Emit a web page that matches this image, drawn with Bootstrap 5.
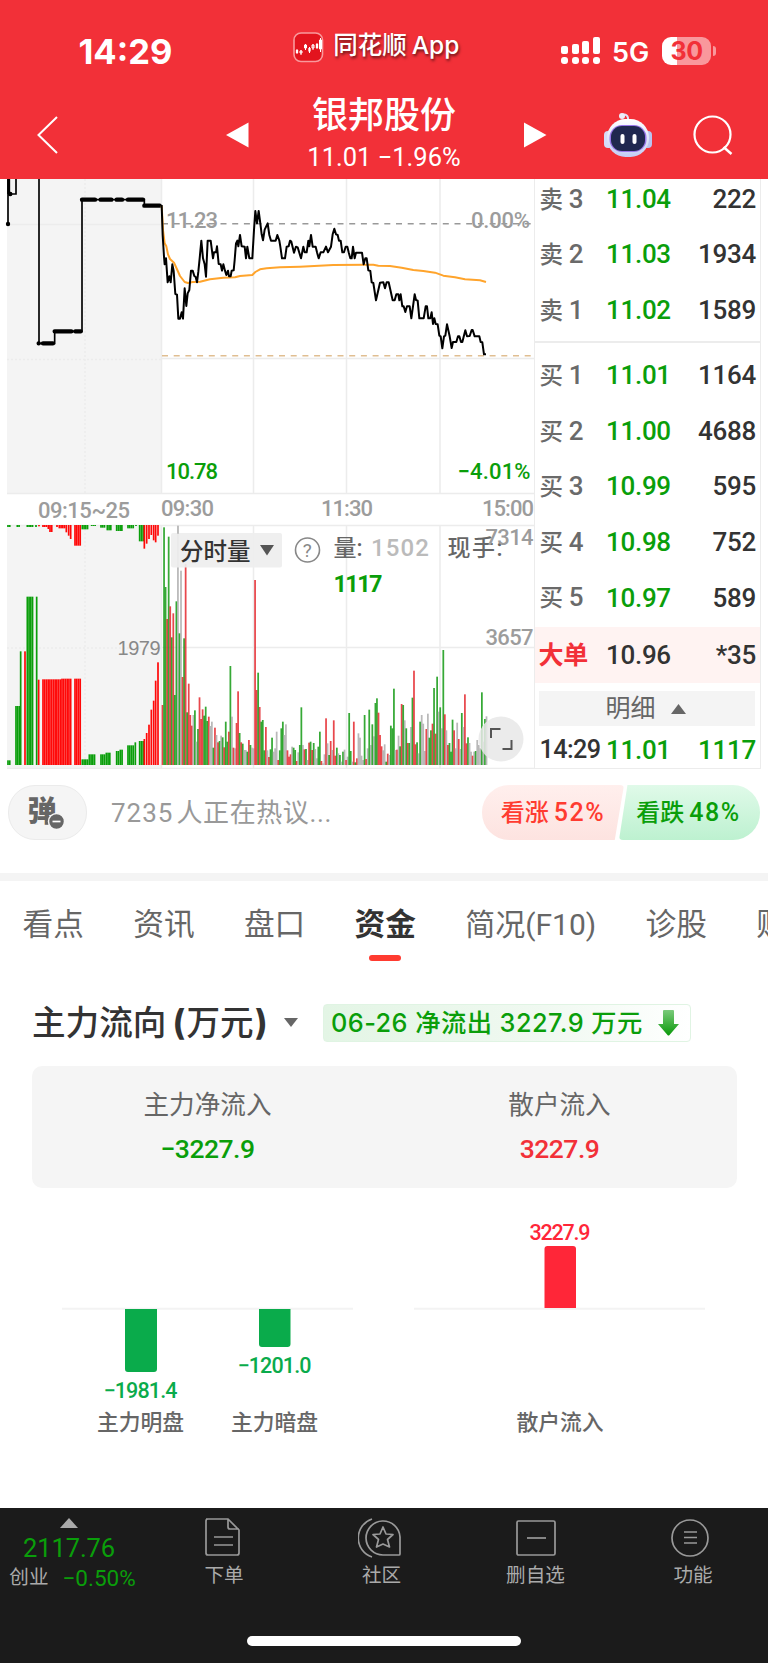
<!DOCTYPE html>
<html lang="zh-CN">
<head>
<meta charset="utf-8">
<meta name="viewport" content="width=device-width, initial-scale=1">
<title>银邦股份</title>
<link href="https://cdn.jsdelivr.net/npm/bootstrap@5.3.0/dist/css/bootstrap.min.css" rel="stylesheet">
<style>
:root{--up:#f23038;--down:#0a9e0a}
body{font-family:Roboto,"Noto Sans CJK SC",sans-serif;background:#fff;color:#333;width:768px;height:1663px;overflow:hidden;line-height:1}
.t-down{color:var(--down)}.t-up{color:var(--up)}
svg{display:block;flex:none}
.nw{white-space:nowrap}
.topbar{background:#f23038;height:179px;color:#fff}
.statusrow{height:94px;padding:0 52px 0 78.5px}
.clock{font:700 34.5px/1 Inter,sans-serif;width:213.5px;padding-top:10px}
.appname{font:500 24.5px/1 Inter,"Noto Sans CJK SC",sans-serif;width:227px;margin-left:9.5px;text-shadow:1px 2px 3px #0009;padding-bottom:4px}
.fiveg{font:600 27px/1 Inter,sans-serif;margin:11px 0 0 11px;width:50px}
.batt{width:49px;height:28px;border-radius:9px;background:linear-gradient(90deg,#fff 31%,#f9989c 31%);color:#f23038;font:700 25px/28px Inter,sans-serif;margin-top:8px;letter-spacing:-.5px}
.nub{width:3px;height:10px;border-radius:0 4px 4px 0;background:#f9989c;margin:8px 0 0 2px}
.titlerow{height:85px;padding:0 0 4px 35.5px}
.stockname{font-weight:500;font-size:36px}
.subprice{font-size:25.5px;margin-top:11px}
.book{width:227px;height:590px;border-right:1.5px solid #ececec;border-bottom:1.5px solid #ececec;border-left:1.5px solid #ececec;font-size:26px;font-weight:500}
.brow{height:55.6px;padding-left:4.5px;padding-right:4px;letter-spacing:-.3px}
.blabel{width:66.5px;font-weight:500}
.lv{color:#6a6a6a}
.blabel i{font-style:normal;font-size:23.5px;margin-right:6px}
.detail{height:35px;margin:8px 5px 0 4px;background:#f4f4f4;color:#666;font-size:25px;font-weight:400}
.talk{height:87px;padding:16px 8px 0}
.danmu{width:79px;height:55px;border-radius:27px;background:#f5f5f5;border:1.5px solid #ebebeb}
.talktext{font-size:26px;color:#999;width:371px;margin-left:24px;letter-spacing:.6px}
.vote{height:55px;font-size:24px;font-weight:500}
.vote span{margin-left:5px;font-size:25px;letter-spacing:1.500px}
.voteup{width:142px;color:#ff3b30;background:linear-gradient(#ffefed,#fde3e0);border-radius:27px 4px 4px 27px;clip-path:polygon(0 0,100% 0,93.5% 100%,0 100%)}
.votedown{width:141px;margin-left:-5px;padding-right:2px;background:linear-gradient(#e0fae9,#bdf1d0);border-radius:4px 27px 27px 4px;clip-path:polygon(6% 0,100% 0,100% 100%,0 100%)}
.tabs{height:86px;gap:49.3px;padding:2px 0 0 22.5px;font-size:30.7px;color:#666;overflow:hidden}
.tabs .on{color:#333;font-weight:700}
.tabs .on:after{content:"";position:absolute;left:14.5px;top:45.5px;width:32px;height:6px;border-radius:3px;background:#ff3b30}
.fundhead{height:99px;padding:0 0 14px 32px}
.fundtitle{font-size:33.6px;font-weight:500;width:252px}
.fundtitle b{font-family:Inter,sans-serif;font-size:35px}
.flowtag{margin-left:25px;width:368px;height:38px;padding-left:7px;border:1.5px solid #e0f4e3;border-radius:4px;background:linear-gradient(90deg,#e3f5e5,#f0f9f1 60%,#fff);font-family:Inter,"Noto Sans CJK SC",sans-serif;font-size:25.3px;font-weight:500;letter-spacing:.45px}
.fundcard{height:122px;margin:0 31px 0 32px;border-radius:10px;background:#f5f5f5}
.fundcard .lab{font-size:25.6px;color:#666}
.fundcard .val{font-size:26.5px;font-weight:500;letter-spacing:-.5px;margin-top:17.5px}
.footer{height:155px;background:#1b1b1b;color:#aaa;font-size:19.6px}
.ix{width:138px;padding-top:10px}
.ixval{font-size:25.5px;letter-spacing:-.1px;margin-top:7.5px}
.fi{padding-top:9px}
.fi span{margin-top:9px}
.homebar{width:274px;height:10px;border-radius:5px;background:#fff;margin:0 auto}
</style>
</head>
<body>
<header class="topbar">
  <div class="statusrow d-flex align-items-center">
    <div class="clock">14:29</div>
    <svg width="31" height="31" viewBox="0 0 31 31" style="margin-left:1px"><rect x="1" y="1" width="28.5" height="28.5" rx="7" fill="#e3141e" stroke="#f9999c" stroke-width="1.6"/><g stroke="#fff" stroke-width="1" fill="#fff"><path d="M4 17v5M8 18v5M12.500 12v6M16.500 15v6M20 12v6M24 11v6M27.500 6v14"/><path stroke-width="2.300" d="M4 18v3M16.500 16v3.500M24 12v4"/><path fill="none" d="M7 19h2v2H7zM11.500 13h2v3h-2zM19 13h2v3h-2zM26.500 8h2v9h-2z"/></g></svg>
    <div class="appname nw">同花顺<span style="margin-left:5px">App</span></div>
    <svg width="40" height="28" viewBox="0 0 40 28" fill="#fff" style="margin:8px 0 0 1px"><rect x="0" y="9" width="7" height="8" rx="2"/><rect x="11" y="7" width="7" height="10" rx="2"/><rect x="21" y="4" width="7" height="13" rx="2"/><rect x="32" y="0" width="7" height="17" rx="2"/><rect y="20" width="7" height="7" rx="3"/><rect x="11" y="20" width="7" height="7" rx="3"/><rect x="21" y="20" width="7" height="7" rx="3"/><rect x="32" y="20" width="7" height="7" rx="3"/></svg>
    <div class="fiveg flex-shrink-0">5G</div><div class="batt text-center flex-shrink-0">30</div><div class="nub flex-shrink-0"></div>
  </div>
  <div class="titlerow d-flex align-items-center">
    <svg width="24" height="42" viewBox="0 0 24 42" fill="none" stroke="#fff" stroke-width="2"><path d="M21 3 2.500 21 21 39"/></svg>
    <svg width="24" height="28" viewBox="0 0 24 28" style="margin-left:166.500px" fill="#fff"><path d="M0 14 22.500 1.500v25z"/></svg>
    <div class="text-center nw" style="width:274px;padding-right:6px"><div class="stockname">银邦股份</div><div class="subprice">11.01 −1.96%</div></div>
    <svg width="24" height="28" viewBox="0 0 24 28" fill="#fff"><path d="M22.500 14 0 1.500v25z"/></svg>
    <svg width="50" height="48" viewBox="0 0 50 48" style="margin:-2px 0 0 55px"><defs><linearGradient id="rb" x1="0" y1="0" x2="0" y2="1"><stop offset="0" stop-color="#fff"/><stop offset="1" stop-color="#c3cdf5"/></linearGradient></defs><path d="M18 5q8-2 7 6" fill="none" stroke="#dfe3f8" stroke-width="2"/><circle cx="19" cy="6" r="3" fill="#eceefa"/><rect x="1" y="21" width="9" height="17" rx="4" fill="#d5dcf8"/><rect x="40" y="21" width="9" height="17" rx="4" fill="#b9c4f1"/><rect x="4" y="9" width="42" height="38" rx="18.500" fill="url(#rb)"/><rect x="6.500" y="15" width="37" height="27" rx="12.500" fill="#9876e8"/><rect x="8" y="16" width="34" height="25" rx="11" fill="#20284f"/><rect x="17.500" y="24" width="4" height="10" rx="2" fill="#fff"/><rect x="29.500" y="24" width="4" height="10" rx="2" fill="#fff"/></svg>
    <svg width="42" height="42" viewBox="0 0 42 42" style="margin-left:39px" fill="none" stroke="#fff" stroke-width="2.200"><circle cx="20.500" cy="20.500" r="18"/><path d="m31.500 33 8 7" stroke-width="2.500"/></svg>
  </div>
</header>

<main>
<div class="d-flex">
  <svg width="534" height="590" viewBox="0 179 534 590" font-family='Roboto,"Noto Sans CJK SC",sans-serif'>
    <path fill="#f4f4f4" d="M7 179h154v314H7zM7 525h154v244H7z"/>
    <g stroke="#ececec" stroke-width="1.500" fill="none">
      <path d="M7 224.500h154M161.500 179v314M253.500 179v314M346.500 179v314M440 179v314M161 358.500h373M7 493.500h527M161.500 525v244M253.500 525v244M346.500 525v244M440 525v244M7 525.500h527M161 647.500h373M7 768.500h527"/>
      <path stroke-dasharray="2 2" d="M85 179v314M7 359.500h154M85 525v244M7 648h154"/>
    </g>
    <path stroke="#999" stroke-dasharray="6 5.700" stroke-width="1.500" d="M162 223.700h370"/>
    <path stroke="#e0be91" stroke-dasharray="6 5.700" stroke-width="1.500" d="M162 355.700h370"/>
    <g font-size="22" font-weight="500" fill="#9c9c9c">
      <text x="166" y="227.500" textLength="52">11.23</text><text x="471" y="227.500" textLength="59">0.00%</text>
      <text x="38" y="517.500" textLength="92">09:15~25</text><text x="161" y="516" textLength="53">09:30</text><text x="321" y="516" textLength="52">11:30</text><text x="482" y="516" textLength="52">15:00</text>
    </g>
    <g font-size="22" font-weight="500" fill="#0a9e0a"><text x="166" y="478.500" textLength="52">10.78</text><text x="457.500" y="478.500" textLength="73">−4.01%</text></g>
    <g transform="translate(0 175) scale(.33333)" fill="none" stroke="#000">
      <path stroke-width="5" d="M24 12v135M48 12v45H28M117 12v493h47v-36h82V74h187v18h50"/>
      <path stroke-width="13" stroke-linecap="round" d="M30 57h1M24 147h.1M116 505h.1M129 505h30M164 469h50M226 469h16M246 74h39M302 74h32M350 74h16M384 74h45M433 92h46"/>
      <path stroke-width="9" d="M26 12v45"/>
    </g>
    <g transform="translate(160 175) scale(.33333)" fill="none" stroke-linejoin="round">
      <polyline stroke="#ffa42c" stroke-width="6" points="5,92 9,165 14,205 19,214 24,238 30,252 42,263 52,285 60,303 74,321 84,324 98,321 120,320 150,313 190,308 225,307 240,303 277,300 286,291 300,283 320,280 360,277 420,275 520,270 620,269 640,269 655,272 690,273 725,278 760,285 790,288 825,293 850,302 885,307 915,313 960,316 978,321"/>
      <polyline stroke="#000" stroke-width="6" points="5,90 8,180 12,245 14,268 18,250 23,322 28,304 32,322 37,268 41,288 46,357 51,359 55,431 60,431 65,412 69,431 74,340 79,393 83,355 88,345 93,287 98,287 103,303 107,306 111,322 115,290 119,250 124,197 129,250 134,268 138,305 143,197 152,197 159,250 162,232 168,232 171,214 176,267 182,268 186,287 190,268 195,287 199,300 204,287 207,304 212,304 215,287 221,286 224,255 228,205 232,197 235,214 240,180 245,214 254,215 258,250 262,215 268,250 277,250 282,165 286,108 291,145 296,108 301,145 305,178 309,196 314,164 323,145 328,180 333,197 347,197 352,180 358,197 361,215 366,250 375,250 380,215 386,214 390,197 394,200 402,233 408,215 413,217 423,250 430,215 434,232 440,232 445,197 448,214 453,180 458,215 467,215 471,232 476,250 482,232 490,232 498,215 504,232 513,215 518,178 523,161 528,178 533,180 537,197 542,197 547,232 552,232 557,215 562,215 566,232 571,250 575,250 579,215 584,250 588,233 606,233 611,268 616,250 620,250 625,286 631,288 635,322 640,324 648,376 660,323 670,322 675,340 680,322 686,322 698,376 704,376 709,358 715,358 718,376 722,358 727,394 731,394 736,411 741,394 749,394 754,430 764,358 768,375 773,377 778,430 791,430 797,394 801,394 805,430 811,430 815,412 819,447 823,430 827,447 833,448 838,482 842,484 847,520 852,484 856,482 861,448 869,484 875,519 879,501 889,501 894,484 898,484 903,501 907,501 916,466 921,484 929,483 935,465 938,465 944,484 958,484 962,501 967,502 972,538 978,538"/>
    </g>
    <g id="vol"></g>
    <rect x="171" y="533" width="111" height="34.500" rx="2" fill="#eeeeee" fill-opacity=".92"/>
    <path d="M178 534v-8" stroke="#bdbdbd" stroke-width="1.500"/>
    <text x="180" y="559.500" font-size="23.500" font-weight="500" fill="#333">分时量</text><path d="M260 545h14l-7 10.500z" fill="#555"/>
    <circle cx="307.500" cy="550" r="12" fill="none" stroke="#888" stroke-width="1.600"/><text x="302.800" y="557" font-size="19" fill="#888">?</text>
    <text x="333.500" y="556" font-size="23" font-weight="500" fill="#666">量:</text><text x="371" y="555.500" font-size="24" fill="#bbb" textLength="58" font-weight="500">1502</text>
    <text x="447.500" y="556" font-size="23" font-weight="500" fill="#666" textLength="55">现手:</text>
    <text x="333.500" y="592" font-size="23.500" font-weight="700" fill="#0a9e0a" textLength="49">1117</text>
    <g font-size="22" font-weight="500" fill="#9c9c9c"><text x="485.500" y="544.500" textLength="48">7314</text><text x="485.500" y="645" textLength="48">3657</text></g>
    <text x="117.500" y="654.500" font-size="20" fill="#888" font-family="Liberation Sans,sans-serif" textLength="43">1979</text>
    <circle cx="501" cy="739" r="22.500" fill="#e8e8e8" fill-opacity=".86"/><path d="M491 738v-9h9.500M502.500 749h9v-9" fill="none" stroke="#555" stroke-width="2"/>
  </svg>
  <section class="book">
    <div style="margin-top:-8px;border-bottom:2px solid #ececec;height:171.500px" id="asks"></div>
    <div style="padding-top:5px" id="bids"></div>
    <div class="brow d-flex align-items-center" style="background:#fff3f2;margin-top:2px"><div class="blabel t-up nw" style="font-size:25px;font-weight:600;margin-left:-1px;margin-right:1px">大单</div><div>10.96</div><div class="ms-auto">*35</div></div>
    <div class="detail d-flex align-items-center justify-content-center"><span style="margin-left:-3px">明细</span><svg width="15" height="10" viewBox="0 0 15 10" fill="#666" style="margin-left:15px"><path d="M0 10 7.500 0 15 10z"/></svg></div>
    <div class="d-flex nw" style="padding:11px 4px 0 4.500px;letter-spacing:-.3px"><div style="width:66.500px;font-size:25.200px;letter-spacing:-.6px">14:29</div><div class="t-down">11.01</div><div class="ms-auto t-down">1117</div></div>
  </section>
</div>

<div class="talk d-flex align-items-start">
  <div class="danmu position-relative d-flex align-items-center flex-shrink-0" style="padding-left:18.500px;font-size:29px;font-weight:900;color:#666">弹<svg class="position-absolute" style="left:38px;top:26px" width="19" height="19" viewBox="0 0 19 19"><circle cx="9.500" cy="9.500" r="8" fill="#666" stroke="#f5f5f5" stroke-width="1.500"/><path d="M5.500 9.500h8" stroke="#fff" stroke-width="1.700"/></svg></div>
  <div class="talktext nw align-self-start flex-shrink-0" style="padding-top:15px"><span style="letter-spacing:1px">7235</span><span style="margin-left:3px">人正在热议</span>...</div>
  <div class="vote d-flex"><div class="voteup d-flex align-items-center justify-content-center nw">看涨<span>52%</span></div><div class="votedown t-down d-flex align-items-center justify-content-center nw">看跌<span>48%</span></div></div>
</div>
<div style="height:8px;background:#f4f4f4;margin-top:17px"></div>
<nav class="tabs d-flex align-items-center nw"><span>看点</span><span>资讯</span><span>盘口</span><span class="on position-relative">资金</span><span style="width:131px;font-size:30px">简况(F10)</span><span>诊股</span><span>财</span></nav>

<div class="fundhead d-flex align-items-end">
  <div class="fundtitle nw" style="margin-bottom:11px">主力流向<b style="margin-left:6px;margin-right:1px">(</b>万元<b style="margin-left:1px">)</b></div>
  <svg width="14" height="9" viewBox="0 0 14 9" fill="#666" style="margin-bottom:25px"><path d="M0 0h14L7 9z"/></svg>
  <div class="flowtag t-down d-flex align-items-center nw" style="margin-bottom:10.500px"><span style="width:327px">06-26 净流出 3227.9 万元</span><svg width="21" height="26" viewBox="0 0 21 26"><defs><linearGradient id="ag" x1="0" y1="0" x2="0" y2="1"><stop offset="0" stop-color="#7bca7b"/><stop offset="1" stop-color="#0a9a0a"/></linearGradient></defs><path d="M6 0h9q1 0 1 1v13h5L11.500 25q-1 1-2 0L0 14h5V1q0-1 1-1z" fill="url(#ag)"/></svg></div>
</div>
<div class="fundcard d-flex text-center">
  <div style="width:351px;padding-top:26.500px"><div class="lab">主力净流入</div><div class="val t-down">−3227.9</div></div>
  <div style="width:353px;padding-top:26.500px"><div class="lab">散户流入</div><div class="val t-up">3227.9</div></div>
</div>
<svg width="768" height="320" viewBox="0 1188 768 320" text-anchor="middle">
  <path d="M62 1308.700h291M414 1308.700h291" stroke="#f3f3f3" stroke-width="2"/>
  <g fill="#0aab4b"><path d="M125 1309h32v60q0 3-3 3h-26q-3 0-3-3zM259 1309h31.500v35q0 3-3 3H262q-3 0-3-3z"/><g font-size="21.500" font-weight="500"><text x="140.500" y="1397.500" textLength="74">−1981.4</text><text x="274.500" y="1372.500" textLength="74">−1201.0</text></g></g>
  <g fill="#ff2638"><path d="M544.500 1308v-59q0-3 3-3H573q3 0 3 3v59z"/><text x="560" y="1240" font-size="21.500" font-weight="500" textLength="61">3227.9</text></g>
  <g font-size="21.800" fill="#666" font-weight="500"><text x="140.500" y="1430">主力明盘</text><text x="274.500" y="1430">主力暗盘</text><text x="560" y="1430">散户流入</text></g>
</svg>
</main>

<footer class="footer">
 <div class="d-flex nw" style="height:128px">
  <div class="ix d-flex flex-column align-items-center t-down"><svg width="18" height="10" viewBox="0 0 18 10" fill="#aaa"><path d="M0 10 9 0l9 10z"/></svg><div class="ixval">2117.76</div><div class="d-flex align-items-center" style="margin:5.500px 0 0 7px"><span style="color:#aaa">创业</span><span style="font-size:22.500px;margin-left:14px">−0.50%</span></div></div>
  <div class="fi d-flex flex-column align-items-center" style="width:172px"><svg width="40" height="40" viewBox="0 0 40 40" fill="none" stroke="#999" stroke-width="1.700" style="margin-left:-4px"><path d="M4 2h22l11 11v23q0 2-2 2H6q-2 0-2-2V4q0-2 2-2zM26 2v8q0 2 2 2h9M12 20h19M12 28h19"/></svg><span>下单</span></div>
  <div class="fi d-flex flex-column align-items-center" style="width:143px"><svg width="44" height="42" viewBox="0 0 44 42" fill="none" stroke="#999" stroke-width="1.700" style="margin:0 0 -2px -3px"><path d="M14 2a20 20 0 0 0 0 38M42 37V20a17 17 0 1 0-17 18h16q1 0 1-1z"/><path stroke-linejoin="round" d="m25 10 3 7 7 .500-5.500 5 2 7.500-6.500-3-6.500 3 2-7.500-5.500-5 7-.500z"/></svg><span>社区</span></div>
  <div class="fi d-flex flex-column align-items-center" style="width:165px"><svg width="42" height="40" viewBox="0 0 42 40" fill="none" stroke="#999" stroke-width="1.700"><rect x="2" y="4" width="38" height="34" rx="1.500"/><path d="M12 21h19"/></svg><span>删自选</span></div>
  <div class="fi d-flex flex-column align-items-center" style="width:150px"><svg width="40" height="40" viewBox="0 0 40 40" fill="none" stroke="#999" stroke-width="1.700" style="margin-left:-6px"><circle cx="20" cy="21" r="18"/><path d="M14 15h13M14 20.500h13M14 26h13"/></svg><span>功能</span></div>
 </div>
 <div class="homebar"></div>
</footer>
<script src="https://cdn.jsdelivr.net/npm/bootstrap@5.3.0/dist/js/bootstrap.bundle.min.js"></script>
<script>
// Order book: side + level, price, lots
const row=(s,n,p,q)=>`<div class="brow d-flex align-items-center"><div class="blabel lv nw"><i>${s}</i>${n}</div><div class="t-down">${p}</div><div class="ms-auto">${q}</div></div>`;
asks.innerHTML=row('卖',3,'11.04',222)+row('卖',2,'11.03',1934)+row('卖',1,'11.02',1589);
bids.innerHTML=row('买',1,'11.01',1164)+row('买',2,'11.00',4688)+row('买',3,'10.99',595)+row('买',4,'10.98',752)+row('买',5,'10.97',589);

// One entry per minute from 09:30: colour letter + bar top, in thirds of a pixel below y=515
const minutes=`r570 g37 g216 r312 g65 r274 g367 r295 g540 g259 n32 g355 n167 r486 g370 r147 g592 r506 r600 r632 n600 g586 n680 g642 r547 r612 r583 g602 g575 g618 r605 n633 n620 g698 r638 n660 r682 g678 n662 g667 r697 g620 g680 r650 g453 n605 r698 n700 r624 r529 g654 r682 g686 n705 n705 g710 r675 g690 n698 n700 r195 r525 g473 r576 g620 g615 g706 r636 n706 r726 g703 g668 n710 n700 n650 r735 g706 g640 g620 n660 n628 r706 r725 r718 n695 g698 g705 r738 n712 g690 g577 n690 r703 g702 n735 r683 g680 r705 g684 n702 n730 g695 g650 r738 n745 n718 r610 n685 g720 r678 n705 r616 r722 g698 n715 g720 n740 g710 n704 r735 n725 g594 g708 n740 r620 g742 r730 n655 n668 n722 n735 g600 r732 n700 g584 n690 g628 n664 g564 g550 r593 r660 r694 n706 n688 g740 r716 n720 g632 g640 g521 n705 r704 n662 g694 r567 g570 n616 g640 r684 g684 n636 g548 r467 r688 g682 n715 g620 n600 n626 n708 r642 n596 g668 g646 r626 g519 r656 g485 n590 g577 n640 g405 r598 n646 r690 g684 g710 g614 r646 n700 n623 r672 n702 g594 n636 r538 r685 g667 n684 n710 r722 n710 g708 n675 n690 n700 g532 n680 g612 n604`.split(' ');
const col={r:'#e31f24',g:'#0a960a',n:'#aaa'};
let out='';
const bar=(x,y1,y2,w,c,o=1)=>out+=`<rect x="${(x/3-w/2).toFixed(2)}" y="${(515+y1/3).toFixed(2)}" width="${w}" height="${((y2-y1)/3).toFixed(2)}" fill="${c}" opacity="${o}"/>`;
const pitch=(1459.5-487.5)/(minutes.length-1);
minutes.forEach((m,i)=>bar(487.5+i*pitch,+m.slice(1),750,1.75,col[m[0]],.82));
// Call-auction bars: colour, first x, last x, edge
const R='#ff0808',G='#0a9e0a';
const run=(c,a,b,e,top)=>{for(let x=a;x<=b+.5;x+=5.2)top?bar(x,30,e,1.7,c):bar(x,e,750,1.7,c)};
[[G,24,29,736],[G,48,58,573],[G,62,62,409],[R,75,75,409],[G,82,98,245],[G,110,110,245],[R,116,116,494],[R,129,183,493],[R,186,214,491],[R,225,243,491],[G,247,265,733],[G,268,284,718],[G,303,314,718],[G,319,332,713],[G,350,356,708],[G,361,366,704],[G,384,402,691],[G,406,406,682],[G,419,430,678],[R,433,433,672],[R,440,440,654],[R,447,447,629],[R,454,454,584],[R,461,461,557],[R,467,467,497],[R,474,474,442]].forEach(a=>run(...a,0));
[[G,24,29,36],[G,52,58,36],[G,82,98,36],[G,108,108,36],[R,117,117,34],[R,129,140,36],[R,145,145,42],[R,150,158,51],[R,171,173,36],[R,178,195,40],[R,199,199,52],[R,206,206,62],[R,212,212,72],[R,225,243,92],[G,247,263,43],[G,275,285,33],[G,303,317,38],[G,322,332,46],[G,350,366,48],[G,384,402,40],[G,408,408,33],[G,419,430,79],[R,433,433,101],[R,440,440,86],[R,447,447,72],[R,454,454,60],[R,461,461,76],[R,467,467,82],[R,474,474,62]].forEach(a=>run(...a,1));
vol.innerHTML=out;
</script>
</body>
</html>
